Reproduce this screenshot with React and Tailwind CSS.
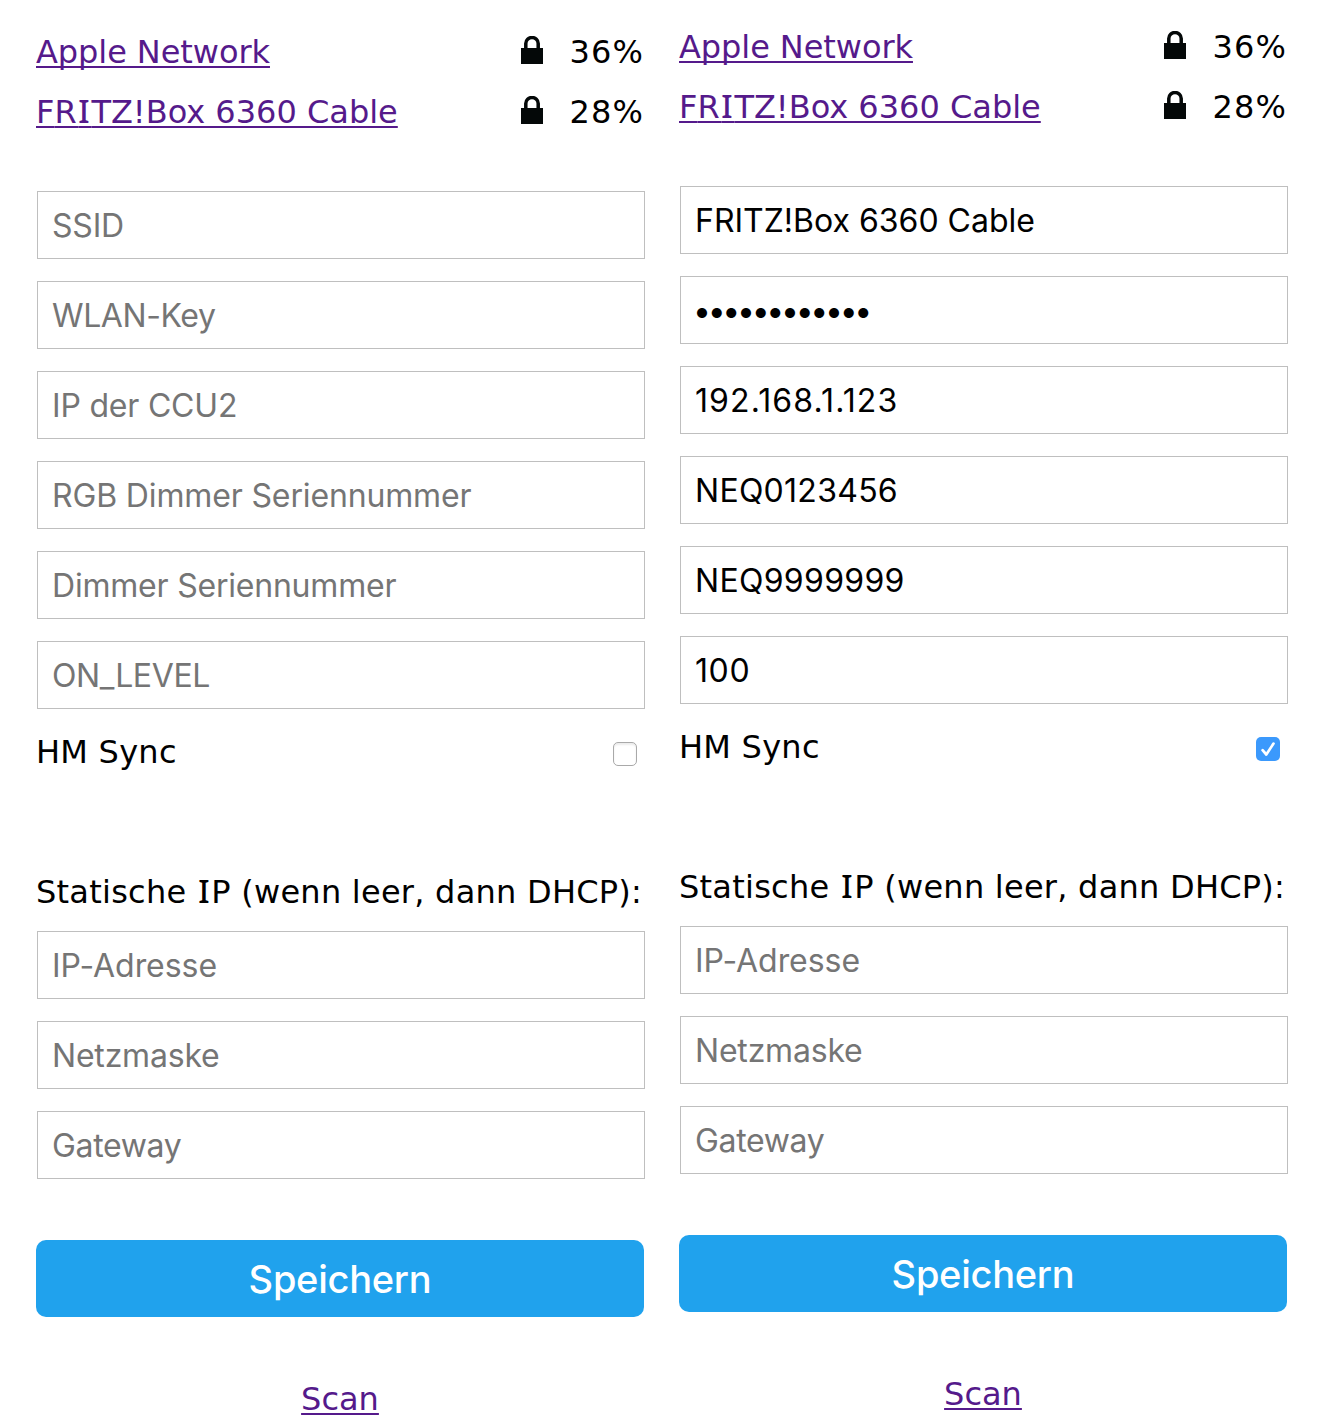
function Lock() {
  return (
    <svg className="h-[29px] w-[22px] shrink-0" viewBox="0 0 22 29" fill="none">
      <path d="M4.8 14V7.4a6.2 5.9 0 0 1 12.4 0V14" stroke="#040808" strokeWidth="3.5" />
      <rect y="12" width="22" height="16" fill="#040808" />
    </svg>
  );
}

// Capital I with serifs, spaced like the surrounding wide sans text.
// `before` is the character ahead of it, which carries half of the extra spacing.
function SerifI({ before }) {
  return (
    <>
      <span className="tracking-[1.7px]">{before}</span>
      <span className="font-['Noto_Sans'] font-medium leading-none tracking-[1.7px]">I</span>
    </>
  );
}

function Network({ children, level }) {
  return (
    <div className="flex h-10 items-start">
      <a
        href="#"
        className="text-[#551a8b] underline decoration-2 underline-offset-[3px] [text-decoration-skip-ink:none]"
      >
        {children}
      </a>
      <div className="ml-auto flex items-start">
        <div className="pt-1">
          <Lock />
        </div>
        <span className="ml-[26.5px] w-[74.5px] tracking-[1.1px]">{level}</span>
      </div>
    </div>
  );
}

function Field({ placeholder, value = "", className = "" }) {
  return (
    <input
      type="text"
      readOnly
      placeholder={placeholder}
      value={value}
      className={`ml-px block h-[68px] w-[608px] shrink-0 border border-[#bfbfbf] bg-white pr-[14px] font-['Inter',sans-serif] text-[32px] text-black outline-none placeholder:text-[#757575] ${className}`}
    />
  );
}

function Checkbox({ checked }) {
  if (checked) {
    return (
      <span className="mr-[7px] block size-6 rounded-[5px] bg-[#3b99fc]">
        <svg className="size-6" viewBox="0 0 24 24" fill="none">
          <path d="M6.6 13.2l3.7 4.3 7.2-10.9" stroke="#fff" strokeWidth="2.7" strokeLinecap="round" strokeLinejoin="round" />
        </svg>
      </span>
    );
  }
  return (
    <span className="mr-[7px] block size-6 rounded-[5px] border border-[#a9a9a9] bg-white shadow-[inset_0_2px_2px_#ececec]" />
  );
}

function Panel({ fields, checked, className }) {
  return (
    <section className={`flex w-[608px] flex-col ${className}`}>
      <div className="flex flex-col gap-5">
        <Network level="36%">
          <span className="tracking-[-0.07px]">Apple Network</span>
        </Network>
        <Network level="28%">
          F<SerifI before="R" />
          TZ!Box 6360 Cable
        </Network>
      </div>

      <div className="mt-[59px] flex flex-col gap-[22px]">
        {fields.map((field) => (
          <Field key={field.placeholder} {...field} />
        ))}
      </div>

      <div className="mt-[23px] flex h-10 items-start justify-between">
        <span className="tracking-[0.25px]">HM Sync</span>
        <div className="pt-[10px]">
          <Checkbox checked={checked} />
        </div>
      </div>

      <p className="mt-[100px] h-10 whitespace-nowrap tracking-[0.25px]">
        Statische
        <SerifI before=" " />P (wenn leer, dann DHCP):
      </p>

      <div className="mt-[19px] flex flex-col gap-[22px]">
        <Field placeholder="IP-Adresse" className="pl-[14px] tracking-[-0.05px]" />
        <Field placeholder="Netzmaske" className="pl-[14px] tracking-[-0.2px]" />
        <Field placeholder="Gateway" className="pl-[14px] tracking-[-0.35px]" />
      </div>

      <button className="mt-[61px] h-[77px] rounded-[10px] bg-[#20a2ed] pt-px font-['Inter',sans-serif] text-[38px] font-medium tracking-[-0.25px] text-white">
        Speichern
      </button>

      <a
        href="#"
        className="mt-[62px] self-center text-[#551a8b] underline decoration-2 underline-offset-[3px] [text-decoration-skip-ink:none]"
      >
        Scan
      </a>
    </section>
  );
}

const emptyFields = [
  { placeholder: "SSID", className: "pl-[14px] tracking-[-0.2px]" },
  { placeholder: "WLAN-Key", className: "pl-[14px] tracking-[-0.4px]" },
  { placeholder: "IP der CCU2", className: "pl-[14px] tracking-[-0.2px]" },
  { placeholder: "RGB Dimmer Seriennummer", className: "pl-[14px] tracking-[-0.14px]" },
  { placeholder: "Dimmer Seriennummer", className: "pl-[14px] tracking-[-0.21px]" },
  { placeholder: "ON_LEVEL", className: "pl-[14px] tracking-[-0.37px]" },
];

const filledFields = [
  { placeholder: "SSID", value: "FRITZ!Box 6360 Cable", className: "pl-[14px] tracking-[0px]" },
  { placeholder: "WLAN-Key", value: "••••••••••••", className: "pl-[12px] tracking-[-3.33px]" },
  { placeholder: "IP der CCU2", value: "192.168.1.123", className: "pl-[14px] tracking-[1.1px]" },
  { placeholder: "RGB Dimmer Seriennummer", value: "NEQ0123456", className: "pl-[14px] tracking-[0.27px]" },
  { placeholder: "Dimmer Seriennummer", value: "NEQ9999999", className: "pl-[14px] tracking-[0.3px]" },
  { placeholder: "ON_LEVEL", value: "100", className: "pl-[14px] tracking-[0.6px]" },
];

export default function App() {
  return (
    <main className="flex h-[1427px] w-[1325px] items-start gap-[35px] overflow-hidden bg-white pl-9 font-['DejaVu_Sans',sans-serif] text-[32px] leading-10 text-black">
      <Panel fields={emptyFields} checked={false} className="pt-8" />
      <Panel fields={filledFields} checked className="pt-[27px]" />
    </main>
  );
}
